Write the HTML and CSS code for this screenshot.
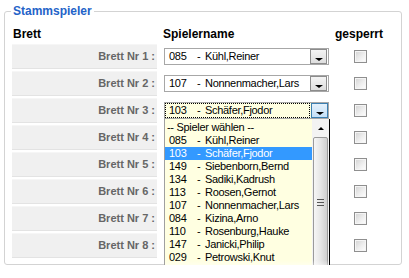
FILE: index.html
```html
<!DOCTYPE html>
<html lang="de">
<head>
<meta charset="utf-8">
<title>Stammspieler</title>
<link rel="stylesheet" href="styles.css">
</head>
<body>
<fieldset class="box">
  <legend class="legend">Stammspieler</legend>
  <div class="grid head">
    <div class="h-brett">Brett</div>
    <div class="h-name">Spielername</div>
    <div class="h-gesp">gesperrt</div>
  </div>
  <div class="rows">
    <div class="grid row">
      <div class="label">Brett Nr 1 :</div>
      <div class="select"><span class="val"><span class="num">085</span><span class="dash">-</span><span class="name">Kühl,Reiner</span></span><span class="btn"><span class="tri"></span></span></div>
      <div class="cb"></div>
    </div>
    <div class="grid row">
      <div class="label">Brett Nr 2 :</div>
      <div class="select"><span class="val"><span class="num">107</span><span class="dash">-</span><span class="name">Nonnenmacher,Lars</span></span><span class="btn"><span class="tri"></span></span></div>
      <div class="cb"></div>
    </div>
    <div class="grid row">
      <div class="label">Brett Nr 3 :</div>
      <div class="select focus"><span class="val"><span class="num">103</span><span class="dash">-</span><span class="name">Schäfer,Fjodor</span></span><span class="btn"><span class="tri"></span></span>
        <div class="list">
          <div class="items">
            <div class="item ph">-- Spieler wählen --</div>
            <div class="item"><span class="num">085</span><span class="dash">-</span><span class="name">Kühl,Reiner</span></div>
            <div class="item sel"><span class="num">103</span><span class="dash">-</span><span class="name">Schäfer,Fjodor</span></div>
            <div class="item"><span class="num">149</span><span class="dash">-</span><span class="name">Siebenborn,Bernd</span></div>
            <div class="item"><span class="num">134</span><span class="dash">-</span><span class="name">Sadiki,Kadrush</span></div>
            <div class="item"><span class="num">113</span><span class="dash">-</span><span class="name">Roosen,Gernot</span></div>
            <div class="item"><span class="num">107</span><span class="dash">-</span><span class="name">Nonnenmacher,Lars</span></div>
            <div class="item"><span class="num">084</span><span class="dash">-</span><span class="name">Kizina,Arno</span></div>
            <div class="item"><span class="num">110</span><span class="dash">-</span><span class="name">Rosenburg,Hauke</span></div>
            <div class="item"><span class="num">147</span><span class="dash">-</span><span class="name">Janicki,Philip</span></div>
            <div class="item"><span class="num">029</span><span class="dash">-</span><span class="name">Petrowski,Knut</span></div>
            <div class="item"><span class="num">109</span><span class="dash">-</span><span class="name">Rosenburg,Thies</span></div>
          </div>
          <div class="sbar">
            <div class="up"><span class="utri"></span></div>
            <div class="thumb"><span class="grip"></span></div>
          </div>
          <div class="fade"></div>
        </div>
      </div>
      <div class="cb"></div>
    </div>
    <div class="grid row">
      <div class="label">Brett Nr 4 :</div>
      <div class="select"><span class="btn"><span class="tri"></span></span></div>
      <div class="cb"></div>
    </div>
    <div class="grid row">
      <div class="label">Brett Nr 5 :</div>
      <div class="select"><span class="btn"><span class="tri"></span></span></div>
      <div class="cb"></div>
    </div>
    <div class="grid row">
      <div class="label">Brett Nr 6 :</div>
      <div class="select"><span class="btn"><span class="tri"></span></span></div>
      <div class="cb"></div>
    </div>
    <div class="grid row">
      <div class="label">Brett Nr 7 :</div>
      <div class="select"><span class="btn"><span class="tri"></span></span></div>
      <div class="cb"></div>
    </div>
    <div class="grid row">
      <div class="label">Brett Nr 8 :</div>
      <div class="select"><span class="btn"><span class="tri"></span></span></div>
      <div class="cb"></div>
    </div>
  </div>
</fieldset>
</body>
</html>
```

FILE: styles.css
```css
html, body {
  margin: 0;
  padding: 0;
  background: #fff;
  overflow: hidden;
}
body {
  font-family: "Liberation Sans", Arial, sans-serif;
  color: #000;
}
.box {
  margin: 5px 7px 0 4px;
  border: 1px solid #d3d3d3;
  border-radius: 3px;
  padding: 0 0 6px 7px;
  min-width: 0;
}
.legend {
  font-size: 12px;
  font-weight: bold;
  line-height: 13px;
  color: #2463c8;
  padding: 0 2px;
  margin-left: -1px;
}
.grid {
  display: grid;
  grid-template-columns: 152px 171px 50px;
}
.head {
  margin-top: 9px;
  margin-bottom: 3px;
  height: 14px;
  line-height: 14px;
  font-size: 12px;
  font-weight: bold;
}
.h-brett { padding-left: 1px; }
.h-name { margin-left: -1px; }
.h-gesp { }
.rows {
  display: flex;
  flex-direction: column;
  gap: 2px;
}
.row {
  height: 25px;
  align-items: center;
}
.label {
  width: 145px;
  height: 25px;
  box-sizing: border-box;
  background: #f0f0f0;
  border-top: 1px solid #f6f6f6;
  border-bottom: 1px solid #e3e3e3;
  text-align: right;
  padding-right: 2px;
  font-size: 11px;
  font-weight: bold;
  line-height: 23px;
  color: #666;
}
.select {
  position: relative;
  width: 165px;
  height: 17px;
  box-sizing: border-box;
  border: 1px solid #a7a7a7;
  background: #fff;
  display: flex;
  font-size: 11px;
  letter-spacing: -0.3px;
  line-height: 15px;
}
.val {
  display: flex;
  padding-left: 4px;
  white-space: nowrap;
}
.num { width: 28px; flex: none; }
.dash { width: 8px; flex: none; }
.name { white-space: nowrap; }
.btn {
  margin-left: auto;
  margin-right: 1px;
  width: 17px;
  height: 15px;
  box-sizing: border-box;
  border: 1px solid #8c8c8c;
  background: linear-gradient(#f4f4f4, #dedede);
  display: flex;
  justify-content: center;
  padding-top: 8px;
}
.tri {
  width: 0;
  height: 0;
  border-left: 4px solid transparent;
  border-right: 4px solid transparent;
  border-top: 3px solid #000;
}
.focus {
  background: #ffffe1;
}
.focus .val {
  margin: 1px 0 1px 1px;
  padding-left: 3px;
  width: 143px;
  box-sizing: border-box;
  outline: 1px dotted #000;
  line-height: 13px;
}
.focus .btn {
  margin-right: 0;
  border-color: #3c7fb1;
  background: linear-gradient(#e5f1fb, #c4e0f8);
}
.cb {
  margin-left: 19px;
  width: 13px;
  height: 13px;
  box-sizing: border-box;
  border: 1px solid #8f8f8f;
  background: linear-gradient(135deg, #d2d2d2 0%, #eeeeee 55%, #ffffff 100%);
  box-shadow: inset 0 0 0 1px #f5f5f5;
}
.list {
  position: absolute;
  z-index: 10;
  left: -1px;
  top: 16px;
  width: 166px;
  height: 159px;
  box-sizing: border-box;
  border-left: 1px solid #a0a0a0;
  border-right: 1px solid #000;
  background: #ffffe1;
  display: flex;
  overflow: hidden;
  letter-spacing: -0.3px;
}
.items {
  width: 147px;
  padding-top: 2px;
}
.item {
  height: 13px;
  line-height: 13px;
  display: flex;
  padding-left: 4px;
  white-space: nowrap;
}
.item.ph { padding-left: 2px; }
.item.sel {
  background: #3399ff;
  color: #fff;
}
.sbar {
  width: 17px;
  background: #f3f3f3;
  display: flex;
  flex-direction: column;
}
.up {
  height: 18px;
  display: flex;
  justify-content: center;
  align-items: center;
}
.utri {
  width: 0;
  height: 0;
  border-left: 3px solid transparent;
  border-right: 3px solid transparent;
  border-bottom: 3px solid #000;
}
.thumb {
  margin: 0 1px 0 1px;
  height: 131px;
  box-sizing: border-box;
  border: 1px solid #9a9a9a;
  border-radius: 2px;
  background: linear-gradient(to right, #f6f6f6, #e6e6e6 50%, #cfcfcf);
  display: flex;
  justify-content: center;
  align-items: center;
}
.grip {
  width: 7px;
  height: 7px;
  background: repeating-linear-gradient(#555 0 1px, transparent 1px 3px);
}
.fade {
  position: absolute;
  left: 0;
  right: 0;
  bottom: 0;
  height: 18px;
  background: linear-gradient(rgba(255,255,255,0), rgba(255,255,255,0.75) 55%, #fff);
}
```
